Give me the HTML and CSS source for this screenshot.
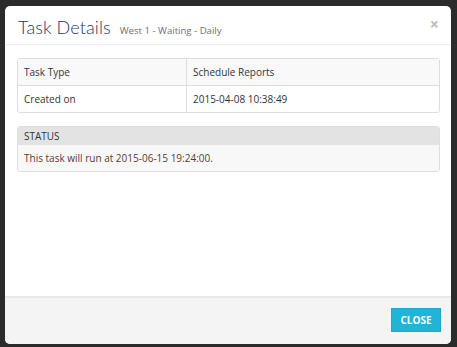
FILE: index.html
```html
<!DOCTYPE html>
<html>
<head>
<meta charset="utf-8">
<link rel="stylesheet" href="styles.css">
</head>
<body>
<div class="backdrop">
  <div class="modal">
    <div class="modal-header">
      <h4 class="title">Task Details</h4>
      <span class="subtitle">West 1 - Waiting - Daily</span>
      <span class="close-x">&times;</span>
    </div>
    <div class="modal-body">
      <table class="details">
        <tr class="odd"><td class="label">Task Type</td><td>Schedule Reports</td></tr>
        <tr><td class="label">Created on</td><td>2015-04-08 10:38:49</td></tr>
      </table>
      <div class="panel">
        <div class="panel-heading">STATUS</div>
        <div class="panel-body">This task will run at 2015-06-15 19:24:00.</div>
      </div>
    </div>
    <div class="modal-footer">
      <button class="btn-close">CLOSE</button>
    </div>
  </div>
</div>
</body>
</html>
```

FILE: styles.css
```css
html, body {
  margin: 0;
  padding: 0;
  background: #2b2b2b;
  font-family: "Open Sans", "Liberation Sans", sans-serif;
}
.backdrop {
  width: 457px;
  height: 347px;
  padding: 6px 6px 3px 5px;
  box-sizing: border-box;
}
.modal {
  background: #fff;
  border-radius: 5px;
  height: 338px;
  width: 446px;
  display: flex;
  flex-direction: column;
  overflow: hidden;
}
.modal-header {
  display: flex;
  align-items: baseline;
  padding: 10px 12px 0 13px;
  height: 39px;
  box-sizing: border-box;
  border-bottom: 1px solid #ececec;
}
.title {
  margin: 0;
  font-family: "Lato", "Open Sans", sans-serif;
  font-weight: 300;
  font-size: 18px;
  color: #22385c;
  letter-spacing: 0.1px;
}
.subtitle {
  margin-left: 9px;
  font-size: 9.6px;
  color: #6f6f6f;
}
.close-x {
  margin-left: auto;
  font-size: 16px;
  font-weight: 700;
  color: #bcbcbc;
  line-height: 1;
  position: relative;
  top: -4px;
}
.modal-body {
  flex: 1;
  padding: 13px 11px 0 12px;
}
.details {
  width: 100%;
  border-collapse: separate;
  border-spacing: 0;
  border: 1px solid #dedede;
  border-radius: 3px;
  font-size: 10px;
  color: #333;
}
.details td {
  height: 26px;
  padding: 0 6px;
  vertical-align: middle;
}
.details tr.odd td {
  background: #f9f9f9;
  border-bottom: 1px solid #dedede;
}
.details td.label {
  width: 156px;
  border-right: 1px solid #dedede;
}
.panel {
  margin-top: 13px;
  border: 1px solid #dedede;
  border-radius: 3px;
  overflow: hidden;
  font-size: 10px;
}
.panel-heading {
  background: #e3e3e3;
  color: #333;
  height: 18px;
  line-height: 18px;
  padding: 0 6px;
}
.panel-body {
  background: #f8f8f8;
  color: #5a3a2e;
  height: 26px;
  line-height: 26px;
  padding: 0 6px;
}
.modal-footer {
  height: 48px;
  background: #f4f4f4;
  border-top: 2px solid #e8e8e8;
  display: flex;
  justify-content: flex-end;
  align-items: flex-start;
  padding: 10px 10px 0 0;
  box-sizing: border-box;
}
.btn-close {
  width: 50px;
  height: 24px;
  background: #20b4d6;
  border: 1px solid #1ea9c9;
  color: #fff;
  font-family: "Open Sans", sans-serif;
  font-weight: 700;
  font-size: 10px;
  padding: 0;
}
```
